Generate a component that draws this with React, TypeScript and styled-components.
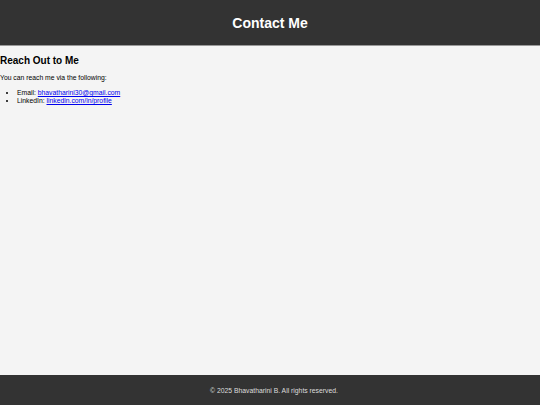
import styled, { createGlobalStyle } from "styled-components";

const GlobalStyle = createGlobalStyle`
  html, body {
    margin: 0;
    padding: 0;
    height: 100%;
  }
  body {
    font-family: "Liberation Sans", Arial, sans-serif;
    background: #f4f4f4;
    color: #000;
  }
  #root {
    height: 100%;
  }
`;

const Page = styled.div`
  display: flex;
  flex-direction: column;
  min-height: 100vh;
`;

const Header = styled.header`
  background: #333;
  color: #fff;
  height: 45px;
  border-bottom: 1px solid #999;
  display: flex;
  align-items: center;
  justify-content: center;
`;

const Title = styled.h1`
  margin: 0;
  font-size: 14px;
  font-weight: bold;
`;

const Main = styled.main`
  flex: 1;
  padding-top: 9px;
`;

const SectionTitle = styled.h2`
  margin: 0 0 8px;
  font-size: 10px;
  font-weight: bold;
`;

const Text = styled.p`
  margin: 0 0 8px;
  font-size: 6.8px;
`;

const List = styled.ul`
  margin: 0;
  padding-left: 17px;
  font-size: 6.8px;
  line-height: 8px;
`;

const Link = styled.a`
  color: #0000ee;
  text-decoration: underline;
`;

const Footer = styled.footer`
  background: #333;
  color: #ddd;
  height: 30px;
  padding-left: 8px;
  display: flex;
  align-items: center;
  justify-content: center;
  font-size: 6.8px;
`;

const App = () => {
  return (
    <Page>
      <GlobalStyle />
      <Header>
        <Title>Contact Me</Title>
      </Header>
      <Main>
        <SectionTitle>Reach Out to Me</SectionTitle>
        <Text>You can reach me via the following:</Text>
        <List>
          <li>
            Email:{" "}
            <Link href="mailto:bhavatharini30@gmail.com">bhavatharini30@gmail.com</Link>
          </li>
          <li>
            LinkedIn: <Link href="#">linkedin.com/in/profile</Link>
          </li>
        </List>
      </Main>
      <Footer>© 2025 Bhavatharini B. All rights reserved.</Footer>
    </Page>
  );
};

export default App;
